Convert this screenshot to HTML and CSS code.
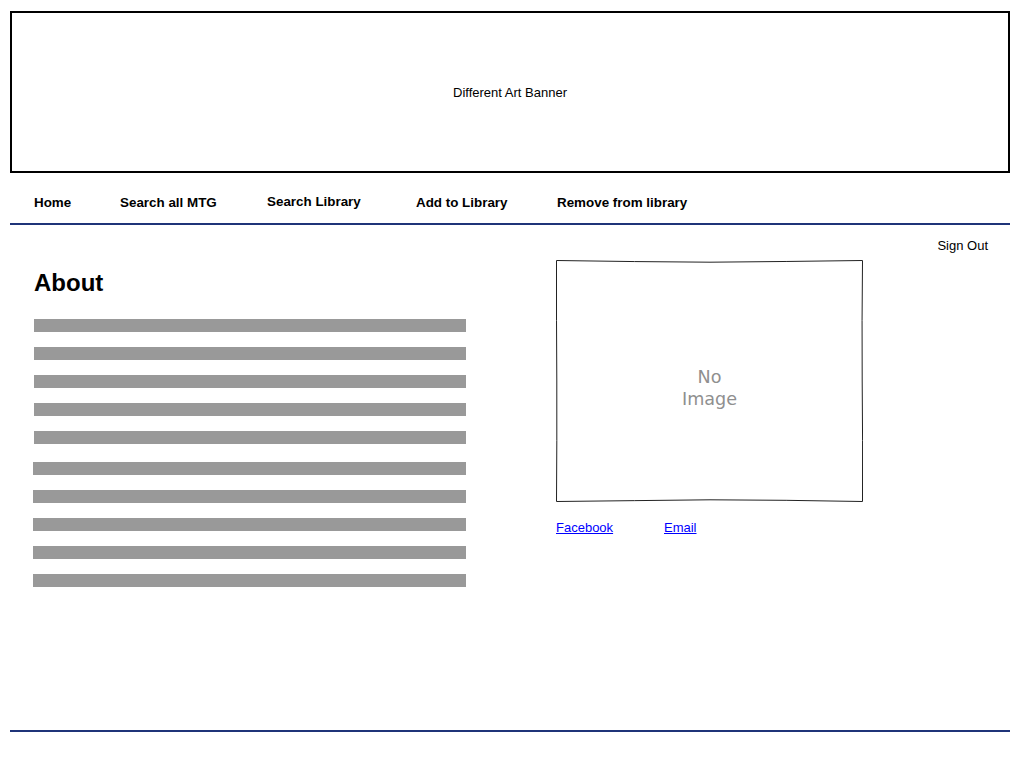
FILE: index.html
```html
<!DOCTYPE html>
<html>
<head>
<meta charset="utf-8">
<link rel="stylesheet" href="styles.css">
</head>
<body>
<div class="page">
  <div class="banner">Different Art Banner</div>
  <nav class="nav">
    <a class="nav-item">Home</a>
    <a class="nav-item">Search all MTG</a>
    <a class="nav-item nav-up">Search Library</a>
    <a class="nav-item">Add to Library</a>
    <a class="nav-item">Remove from library</a>
  </nav>
  <main class="main">
    <div class="signout-row"><span class="signout">Sign Out</span></div>
    <div class="columns">
      <section class="about">
        <h1 class="about-title">About</h1>
        <div class="bars">
          <div class="bar"></div>
          <div class="bar"></div>
          <div class="bar"></div>
          <div class="bar"></div>
          <div class="bar"></div>
        </div>
        <div class="bars bars-second">
          <div class="bar"></div>
          <div class="bar"></div>
          <div class="bar"></div>
          <div class="bar"></div>
          <div class="bar"></div>
        </div>
      </section>
      <section class="side">
        <div class="image-box">
          <svg class="image-frame" width="307" height="242" viewBox="0 0 307 242">
            <path d="M0.5 0.5 Q 80 1.8 154 2.2 Q 230 1.6 306.5 0.5 Q 305.8 60 306.2 121 Q 306.8 180 306.5 241.5 Q 230 240 154 239.8 Q 80 240.6 0.5 241.5 Q 1 180 0.8 121 Q 0.4 60 0.5 0.5 Z" fill="none" stroke="#222" stroke-width="1"/>
          </svg>
          <span class="no-image">No<br>Image</span>
        </div>
        <div class="links">
          <a class="link link-fb" href="#">Facebook</a>
          <a class="link" href="#">Email</a>
        </div>
      </section>
    </div>
  </main>
  <div class="footer-line"></div>
</div>
</body>
</html>
```

FILE: styles.css
```css
* { box-sizing: border-box; }
html, body { margin: 0; padding: 0; background: #fff; }
body { font-family: "Liberation Sans", Arial, sans-serif; color: #000; }

.page {
  width: 1000px;
  margin-left: 10px;
  padding-top: 11px;
}

.banner {
  height: 162px;
  border: 2px solid #000;
  display: flex;
  align-items: center;
  justify-content: center;
  font-size: 13px;
  line-height: 15px;
}

.nav {
  display: grid;
  grid-template-columns: 86px 147px 149px 141px auto;
  padding: 22px 0 13px 24px;
  border-bottom: 2px solid #1f3479;
}
.nav-item {
  font-size: 13.4px;
  font-weight: bold;
  line-height: 15px;
  color: #000;
  white-space: nowrap;
}
.nav-up { margin-top: -1px; }

.main {
  height: 505px;
  padding-top: 13px;
}

.signout-row {
  display: flex;
  justify-content: flex-end;
  padding-right: 22px;
  height: 15px;
  margin-bottom: 7px;
}
.signout {
  font-size: 13px;
  line-height: 15px;
}

.columns {
  display: flex;
}

.about {
  width: 546px;
  padding-left: 24px;
}
.about-title {
  margin: 9px 0 22px 0;
  font-size: 24px;
  line-height: 28px;
  font-weight: bold;
}
.bars {
  display: flex;
  flex-direction: column;
  gap: 15px;
  width: 432px;
}
.bars-second {
  margin-top: 18px;
  margin-left: -1px;
  width: 433px;
}
.bar {
  height: 13px;
  background: #999999;
}

.side {
  width: 307px;
}
.image-box {
  position: relative;
  width: 307px;
  height: 242px;
  display: flex;
  align-items: center;
  justify-content: center;
}
.image-frame {
  position: absolute;
  left: 0;
  top: 0;
}
.no-image {
  font-family: "DejaVu Sans", Verdana, sans-serif;
  font-size: 17.6px;
  line-height: 22px;
  color: #8f8f8f;
  text-align: center;
  margin-top: 14px;
}

.links {
  display: flex;
  margin-top: 18px;
}
.link {
  font-size: 13px;
  line-height: 15px;
  color: #0000ff;
  text-decoration: underline;
}
.link-fb { width: 108px; }

.footer-line {
  height: 2px;
  background: #1f3479;
}
```
